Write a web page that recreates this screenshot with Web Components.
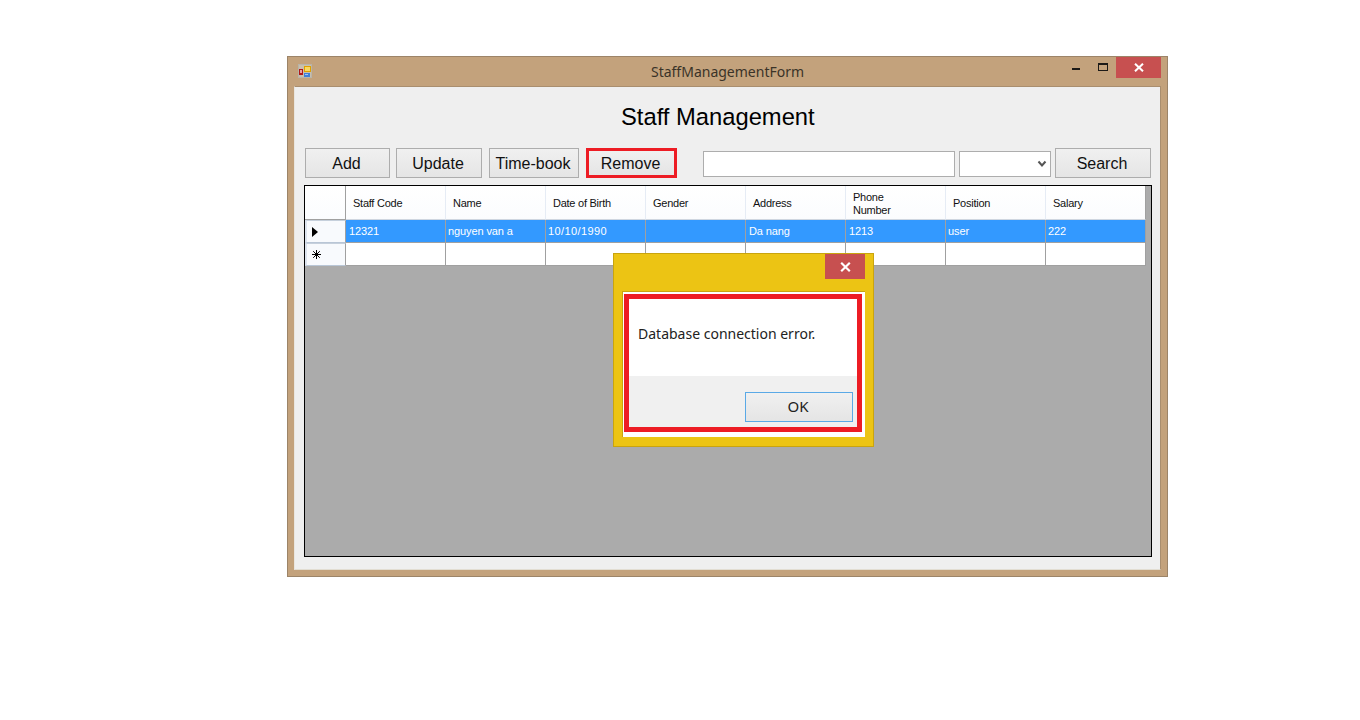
<!DOCTYPE html>
<html><head><meta charset="utf-8"><style>
html,body{margin:0;padding:0;background:#fff;width:1360px;height:720px;overflow:hidden}
body{font-family:"Liberation Sans",Arial,sans-serif}
app-window{margin:56px 0 0 287px}
</style></head><body>
<app-window title-text="StaffManagementForm">
  <staff-form></staff-form>
  <msg-dialog slot="overlay" text="Database connection error." button="OK"></msg-dialog>
</app-window>
<script>
function def(name, css, html, init){
  customElements.define(name, class extends HTMLElement{
    connectedCallback(){
      if(this.shadowRoot) return;
      const r=this.attachShadow({mode:'open'});
      r.innerHTML='<style>'+css+'</style>'+(typeof html==='function'?html(this):html);
      if(init) init(this,r);
    }
  });
}
def('win-button',`
:host{display:block;box-sizing:border-box;height:30px;width:var(--w,85px);border:1px solid #adadad;background:linear-gradient(#f0f0f0,#e5e5e5);font:16px "Liberation Sans",Arial,sans-serif;color:#111}
:host([alert]){border:3px solid #ed1c24}
:host([focus-blue]){border:1px solid #5aa9e6;font:15px "Noto Sans",sans-serif;color:#222}
:host([focus-blue]) div{padding:0 2px 2px 0}
div{display:flex;box-sizing:border-box;height:100%;align-items:center;justify-content:center;padding:1px 2px 0 0}
`,`<div><slot></slot></div>`);
def('win-input',`
:host{display:block;box-sizing:border-box;height:26px;width:var(--w,100px);margin-top:3px;border:1px solid #adadad;background:#fff;position:relative}
svg{position:absolute;right:3px;top:8px}
`,h=>h.hasAttribute('combo')?`<svg width="10" height="8" viewBox="0 0 10 8"><path d="M1.5 1.5 5 5.5 8.5 1.5" fill="none" stroke="#555" stroke-width="2"/></svg>`:'');
def('data-grid',`
:host{display:block;box-sizing:border-box;width:848px;height:372px;border:1px solid #000;background:#ababab;font:11px "Liberation Sans",Arial,sans-serif;color:#111}
.g{display:grid;grid-template-columns:41px repeat(8,100px);grid-template-rows:34px 23px 23px}
.c{box-sizing:border-box;display:flex;align-items:center;overflow:hidden;white-space:nowrap}
.h{background:linear-gradient(#fff,#fbfcfe);border-right:1px solid #e6ecf5;border-bottom:1px solid #cfd6e0;padding:2px 0 0 7px;line-height:13px;letter-spacing:-.25px;white-space:normal}
.h.rh{border-right:1px solid #a0a0a0;border-bottom:1px solid #a0a0a0}
.h.last{border-right:1px solid #a0a0a0}
.r{background:#f8fafd;border-right:1px solid #a0a0a0;border-top:1px solid #c6d0dc;border-bottom:1px solid #b9c6d6;border-left:2px solid #dde4ee;padding-left:5px}
.d{background:#fff;border-right:1px solid #a0a0a0;border-bottom:1px solid #a0a0a0;padding-left:3px;letter-spacing:-.1px}
.s{background:#3399ff;color:#fff}
`,()=>{
 const cols=['Staff Code','Name','Date of Birth','Gender','Address','Phone Number','Position','Salary'];
 const row=['12321','nguyen van a','10/10/1990','','Da nang','1213','user','222'];
 const pad=[3,2,2,3,3,3,2,2];
 const tri='<svg width="6" height="10" viewBox="0 0 6 10"><path d="M0 0 6 5 0 10z" fill="#000"/></svg>';
 const star='<svg width="9" height="9" viewBox="0 0 9 9"><path d="M4.5 0V9M0 4.5H9M1.2 1.2 7.8 7.8M7.8 1.2 1.2 7.8" stroke="#000" stroke-width="1" fill="none"/></svg>';
 let s='<div class="g"><div class="c h rh"></div>';
 cols.forEach((c,i)=>s+=`<div class="c h${i==7?' last':''}" style="${c.includes('Phone')?'width:100px;padding-right:50px':''}">${c}</div>`);
 s+=`<div class="c r">${tri}</div>`;
 row.forEach((v,i)=>s+=`<div class="c d s" style="padding-left:${pad[i]}px${i==2?';letter-spacing:.4px':''}">${v}</div>`);
 s+=`<div class="c r">${star}</div>`;
 row.forEach(()=>s+=`<div class="c d"></div>`);
 return s+'</div>';
});
def('msg-dialog',`
:host{display:block;position:absolute;left:325px;top:196px;box-sizing:border-box;width:261px;height:194px;background:#ecc414;border:1px solid #c9a40f}
.t{display:flex;justify-content:flex-end;padding-right:8px;height:25px}
.x{width:40px;height:25px;background:#c75050;display:flex;align-items:center;justify-content:center}
.f{box-sizing:border-box;margin:12px 0 0 8px;width:243px;height:146px;background:#fff;border:1px solid #c9a40f;border-width:1px 0 0 1px;padding:2px 3px 5px 1px}
.rb{box-sizing:border-box;height:138px;border:5px solid #ed1c24;display:flex;flex-direction:column}
.m{height:77px;background:#fff;padding:26px 0 0 9px;box-sizing:border-box;font:14px/18px "Noto Sans",sans-serif;color:#222;white-space:nowrap}
.b{flex:1;background:#f0f0f0;display:flex;justify-content:flex-end;padding:16px 4px 0 0}
win-button{--w:108px}
`,h=>`<div class="t"><div class="x"><svg width="11" height="10" viewBox="0 0 11 10"><path d="M1.2 .8 9.8 9.2M9.8 .8 1.2 9.2" stroke="#fff" stroke-width="2.2" fill="none"/></svg></div></div>
<div class="f"><div class="rb"><div class="m">${h.getAttribute('text')}</div><div class="b"><win-button focus-blue>${h.getAttribute('button')}</win-button></div></div></div>`);
def('app-window',`
:host{display:block;position:relative;box-sizing:border-box;width:881px;height:521px;background:#c3a27c;border:1px solid #9c8468}
.tb{height:29px;display:flex;position:relative;align-items:center;justify-content:center;font:14px "Noto Sans",sans-serif;color:#3a3328}
.ic{position:absolute;left:10px;top:7px}
.ctl{position:absolute;right:6px;top:0;display:flex;height:21px}
.mn{width:29px;display:flex;justify-content:center;padding-top:7px;box-sizing:border-box}
.cl{width:45px;background:#c75050;display:flex;align-items:center;justify-content:center;margin-left:1px}
.client{box-sizing:border-box;margin-left:6px;width:867px;height:484px;background:#efefef;border:1px solid #a98e6f;border-left-color:#e9e6df;border-bottom-color:#e2ddd2}
`,h=>`<div class="tb">
<svg class="ic" width="14" height="14" viewBox="0 0 14 14"><rect width="14" height="14" fill="#b8b4aa"/><rect x="1" y="1" width="12" height="12" fill="#c9bfae"/><rect x="1" y="5" width="4" height="6" fill="#b01818"/><rect x="2" y="6" width="2" height="3" fill="#e8a0a0"/><rect x="6" y="2" width="7" height="6" fill="#e0a000"/><rect x="7" y="3" width="5" height="4" fill="#f8d860"/><rect x="6" y="9" width="6" height="4" fill="#3f7fd8"/><rect x="7" y="10" width="3" height="1" fill="#a0c4f0"/></svg>
<span>${h.getAttribute('title-text')}</span>
<div class="ctl">
<div class="mn" style="padding-top:11px"><svg width="8" height="3" viewBox="0 0 8 3"><rect width="8" height="2" y="0" fill="#1c1a17"/></svg></div>
<div class="mn" style="width:25px;padding-top:6px"><svg width="10" height="8" viewBox="0 0 10 8"><rect x=".5" y=".5" width="9" height="7" fill="none" stroke="#1c1a17"/><rect x="0" y="0" width="10" height="2" fill="#1c1a17"/></svg></div>
<div class="cl"><svg width="10" height="9" viewBox="0 0 10 9"><path d="M1 .7 9 8.3M9 .7 1 8.3" stroke="#fff" stroke-width="2" fill="none"/></svg></div>
</div></div>
<div class="client"><slot></slot></div><slot name="overlay"></slot>`);
def('staff-form',`
:host{display:block;padding:0 0 0 9px}
h1{margin:0;height:61px;box-sizing:border-box;padding:15px 0 0 317px;font:23.75px/30px "Liberation Sans",Arial,sans-serif;color:#000;white-space:nowrap}
.bar{display:flex;height:30px;padding-left:1px;margin-bottom:7px}
`,`<h1>Staff Management</h1>
<div class="bar">
<win-button style="--w:85px">Add</win-button>
<win-button style="--w:86px;margin-left:6px">Update</win-button>
<win-button style="--w:90px;margin-left:7px">Time-book</win-button>
<win-button alert style="--w:91px;margin-left:7px">Remove</win-button>
<win-input style="--w:252px;margin-left:26px"></win-input>
<win-input combo style="--w:92px;margin-left:4px"></win-input>
<win-button style="--w:96px;margin-left:4px">Search</win-button>
</div>
<data-grid></data-grid>`);
</script>
</body></html>
